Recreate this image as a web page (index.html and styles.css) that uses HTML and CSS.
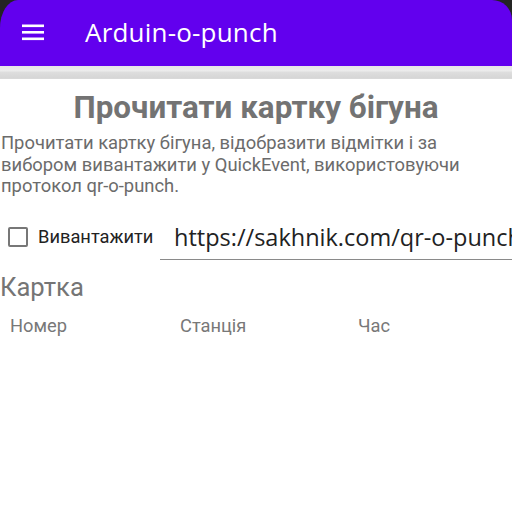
FILE: index.html
```html
<!DOCTYPE html>
<html lang="uk">
<head>
<meta charset="utf-8">
<title>Arduin-o-punch</title>
<link rel="stylesheet" href="styles.css">
</head>
<body>
<div class="frame">
  <header class="appbar">
    <svg class="menu" width="24" height="24" viewBox="0 0 24 24">
      <rect x="1" y="4.5" width="22" height="2.6" fill="#fff"/>
      <rect x="1" y="11" width="22" height="2.6" fill="#fff"/>
      <rect x="1" y="17.5" width="22" height="2.6" fill="#fff"/>
    </svg>
    <span class="app-title">Arduin-o-punch</span>
  </header>
</div>
<div class="shade"></div>
<main class="content">
  <h1 class="heading">Прочитати картку бігуна</h1>
  <p class="desc">Прочитати картку бігуна, відобразити відмітки і за вибором вивантажити у QuickEvent, використовуючи протокол qr-o-punch.</p>
  <div class="upload-row">
    <label class="check">
      <span class="box"></span>
      <span class="check-label">Вивантажити</span>
    </label>
    <div class="url-field"><span class="url">https://sakhnik.com/qr-o-punch</span></div>
  </div>
  <h2 class="section">Картка</h2>
  <div class="table-head">
    <span class="col col-num">Номер</span>
    <span class="col col-station">Станція</span>
    <span class="col col-time">Час</span>
  </div>
</main>
</body>
</html>
```

FILE: styles.css
```css
html, body {
  margin: 0;
  padding: 0;
  background: #ffffff;
}
body {
  width: 512px;
  height: 527px;
  overflow: hidden;
  font-family: Roboto, "Noto Sans", sans-serif;
}
.frame {
  background: #242424;
}
.appbar {
  height: 66px;
  background: #6200ee;
  border-top-left-radius: 18px 28px;
  border-top-right-radius: 20px 20px;
  display: flex;
  align-items: center;
  box-sizing: border-box;
  padding-left: 21px;
}
.menu {
  display: block;
  margin-top: -2px;
}
.app-title {
  color: #ffffff;
  font-family: "Open Sans", sans-serif;
  font-size: 26px;
  margin-left: 40px;
  margin-top: -2px;
  letter-spacing: 0.2px;
}
.shade {
  height: 13px;
  background: linear-gradient(#e6e6e8 0px, #ececec 5px, #dedede 6px, #d6d6d6 12px, #dcdcdc 13px);
}
.content {
  padding: 0;
}
.heading {
  margin: 11px 0 0;
  text-align: center;
  font-size: 31.4px;
  font-weight: 700;
  color: #737373;
  line-height: 36px;
}
.desc {
  margin: 6px 0 0;
  padding-left: 1px;
  font-size: 18.4px;
  line-height: 21.5px;
  color: #6b6b6b;
}
.upload-row {
  display: flex;
  align-items: flex-end;
  margin-top: 4px;
}
.check {
  display: flex;
  align-items: center;
  padding-left: 8px;
  padding-bottom: 13px;
  width: 152px;
  flex: none;
}
.box {
  width: 16px;
  height: 16px;
  border: 2px solid #777777;
  border-radius: 2px;
  flex: none;
}
.check-label {
  margin-left: 10px;
  font-size: 18.3px;
  color: #222222;
  line-height: 20px;
}
.url-field {
  flex: 1;
  min-width: 0;
  height: 59px;
  box-sizing: border-box;
  border-bottom: 1px solid #8a8a8a;
  display: flex;
  align-items: flex-end;
  padding-left: 14px;
  padding-bottom: 8px;
  overflow: hidden;
  white-space: nowrap;
}
.url {
  font-family: "Open Sans", sans-serif;
  font-size: 23.5px;
  line-height: 28px;
  color: #222222;
}
.section {
  margin: 11px 0 0;
  font-size: 25.6px;
  font-weight: 400;
  color: #757575;
  line-height: 32px;
}
.table-head {
  display: grid;
  grid-template-columns: 170px 178px 1fr;
  padding-left: 10px;
  margin-top: 12px;
  font-size: 18.3px;
  line-height: 22px;
  color: #787878;
}
```
